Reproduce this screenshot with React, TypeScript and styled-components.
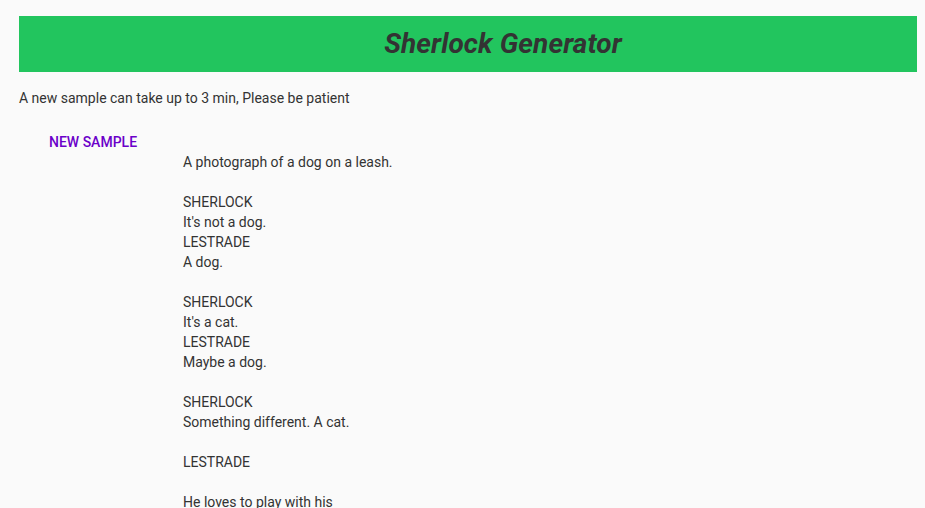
import React from "react";
import styled, { createGlobalStyle } from "styled-components";

const GlobalStyle = createGlobalStyle`
  html, body {
    overflow: hidden;
    scrollbar-width: none;
  }
  ::-webkit-scrollbar {
    width: 0;
    height: 0;
    display: none;
  }
  html {
    background: #fafafa;
  }
  body {
    margin: 8px;
    color: #333;
    font-family: Roboto, "Noto Sans", sans-serif;
  }
`;

const Page = styled.div`
  padding: 8px 0 0 11px;
  margin-right: -8px;
`;

const Header = styled.header`
  box-sizing: border-box;
  height: 56px;
  padding-left: 62px;
  background: #22c55e;
  display: flex;
  align-items: center;
  justify-content: center;
`;

const Title = styled.h1`
  margin: 0 0 2px;
  font-size: 28px;
  font-weight: 700;
  font-style: italic;
  letter-spacing: 0.1px;
  color: #333;
`;

const Notice = styled.p`
  margin: 16px 0 0;
  font-size: 14px;
  line-height: 20px;
`;

const Sample = styled.section`
  padding: 19px 0 0 22px;
`;

const Button = styled.button`
  display: block;
  background: none;
  border: none;
  padding: 6px 8px 1px;
  font-family: Roboto, sans-serif;
  font-size: 14px;
  font-weight: 500;
  line-height: 18px;
  text-transform: uppercase;
  color: #6b00c9;
  cursor: pointer;
`;

const Script = styled.pre`
  margin: 0 0 0 142px;
  font-family: Roboto, sans-serif;
  font-size: 14px;
  line-height: 20px;
  white-space: pre-wrap;
`;

const sample = `A photograph of a dog on a leash.

SHERLOCK
It's not a dog.
LESTRADE
A dog.

SHERLOCK
It's a cat.
LESTRADE
Maybe a dog.

SHERLOCK
Something different. A cat.

LESTRADE

He loves to play with his`;

export default function App() {
  return (
    <Page>
      <GlobalStyle />
      <Header>
        <Title>Sherlock Generator</Title>
      </Header>
      <Notice>A new sample can take up to 3 min, Please be patient</Notice>
      <Sample>
        <Button>New Sample</Button>
        <Script>{sample}</Script>
      </Sample>
    </Page>
  );
}
